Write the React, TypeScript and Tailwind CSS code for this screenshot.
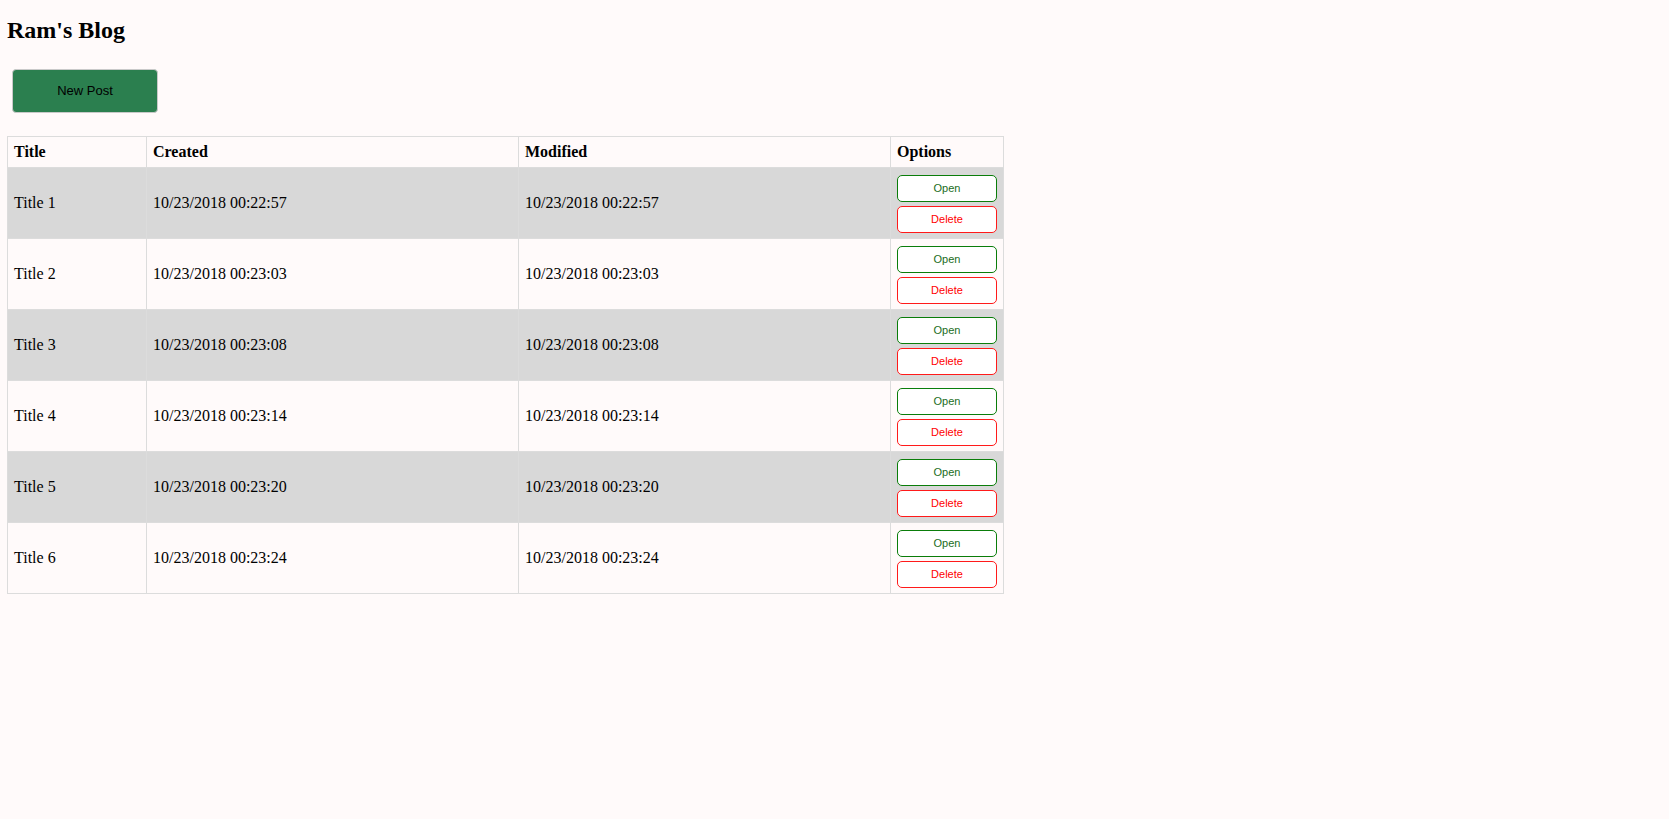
import React from 'react';

type Post = { title: string; created: string; modified: string };

const posts: Post[] = [
  { title: 'Title 1', created: '10/23/2018 00:22:57', modified: '10/23/2018 00:22:57' },
  { title: 'Title 2', created: '10/23/2018 00:23:03', modified: '10/23/2018 00:23:03' },
  { title: 'Title 3', created: '10/23/2018 00:23:08', modified: '10/23/2018 00:23:08' },
  { title: 'Title 4', created: '10/23/2018 00:23:14', modified: '10/23/2018 00:23:14' },
  { title: 'Title 5', created: '10/23/2018 00:23:20', modified: '10/23/2018 00:23:20' },
  { title: 'Title 6', created: '10/23/2018 00:23:24', modified: '10/23/2018 00:23:24' },
];

const serif = "font-['Liberation_Serif','Times_New_Roman',serif]";
const sans = "font-['Liberation_Sans',Arial,sans-serif]";

const App: React.FC = () => {
  return (
    <div className={`min-h-screen bg-[#fffafa] pl-[7px] pt-[17px] text-black ${serif}`}>
      {/* Blog title */}
      <h2 className="text-[24px] font-bold leading-[27px]">Ram's Blog</h2>

      {/* New post */}
      <div className="mt-[25px] ml-[5px]">
        <button
          className={`w-[146px] h-[44px] rounded-[4px] border border-[#c9c9c9] bg-[#2b7f4f] text-[13px] text-black ${sans}`}
        >
          New Post
        </button>
      </div>

      {/* Posts table */}
      <table className="mt-[23px] w-[996px] table-fixed border-collapse border border-[#dcdcdc] text-[16px]">
        <thead>
          <tr className="h-[31px]">
            <th className="w-[139px] border border-[#dcdcdc] px-[6px] text-left font-bold">Title</th>
            <th className="w-[372px] border border-[#dcdcdc] px-[6px] text-left font-bold">Created</th>
            <th className="w-[372px] border border-[#dcdcdc] px-[6px] text-left font-bold">Modified</th>
            <th className="w-[113px] border border-[#dcdcdc] px-[6px] text-left font-bold">Options</th>
          </tr>
        </thead>
        <tbody>
          {posts.map((p, i) => (
            <tr key={p.title} className={i % 2 === 0 ? 'h-[71px] bg-[#d8d8d8]' : 'h-[71px]'}>
              <td className="border border-[#dcdcdc] px-[6px]">{p.title}</td>
              <td className="border border-[#dcdcdc] px-[6px]">{p.created}</td>
              <td className="border border-[#dcdcdc] px-[6px]">{p.modified}</td>
              <td className="border border-[#dcdcdc] px-[6px] pt-[7px] pb-[5px]">
                <div className="flex flex-col gap-[4px]">
                  <button
                    className={`w-[100px] h-[27px] rounded-[5px] border border-[#0a7d0a] bg-white text-[11px] text-[#1b6d1b] ${sans}`}
                  >
                    Open
                  </button>
                  <button
                    className={`w-[100px] h-[27px] rounded-[5px] border border-[#ff1a1a] bg-white text-[11px] text-[#ff0000] ${sans}`}
                  >
                    Delete
                  </button>
                </div>
              </td>
            </tr>
          ))}
        </tbody>
      </table>
    </div>
  );
};

export default App;
